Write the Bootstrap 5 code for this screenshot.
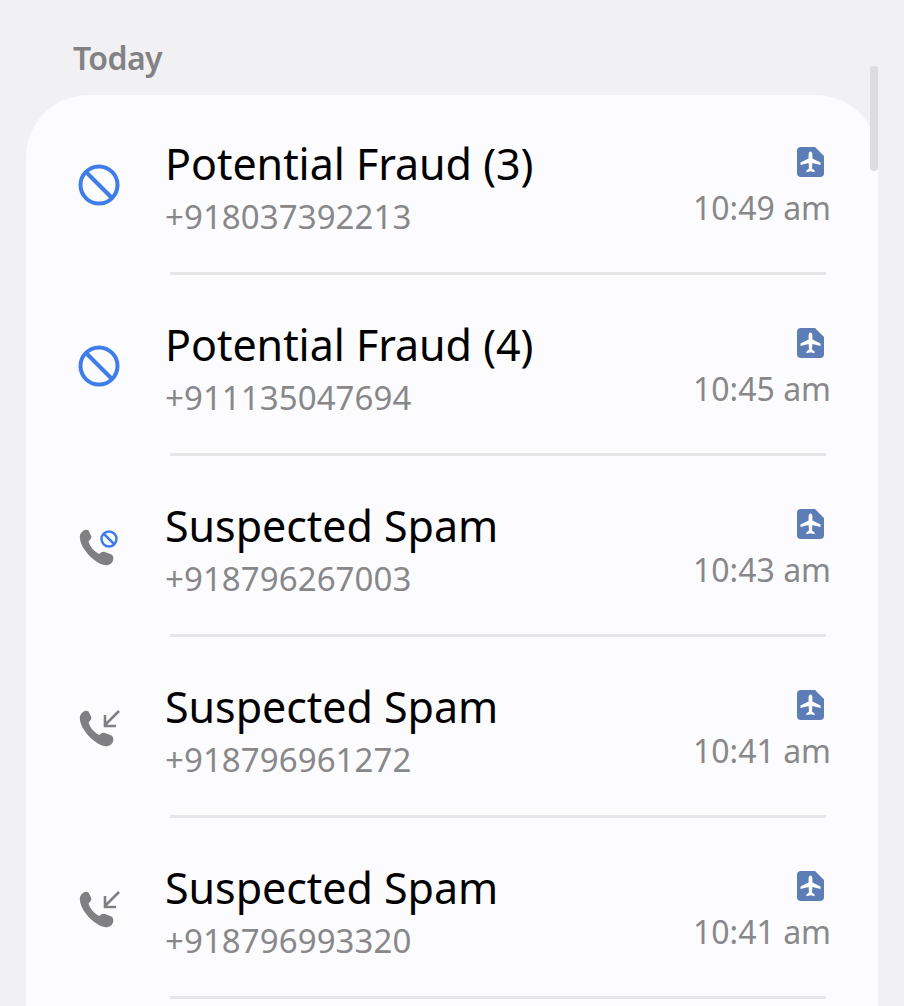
<!DOCTYPE html>
<html lang="en">
<head>
    <meta charset="UTF-8">
    <meta name="viewport" content="width=device-width, initial-scale=1.0">
    <title>Call log</title>
    <link rel="stylesheet" href="https://cdn.jsdelivr.net/npm/bootstrap@5.3.0/dist/css/bootstrap.min.css">
    <style>
        html, body {
            height: 1006px;
            overflow: hidden;
        }
        body {
            background-color: #f1f1f3;
            font-family: "Noto Sans", "Open Sans", sans-serif;
            position: relative;
        }
        .day-label {
            color: #828285;
            font-size: 32px;
            font-weight: 600;
            line-height: 40px;
            letter-spacing: -0.6px;
            padding: 38px 0 17px 73px;
        }
        .log-card {
            background-color: #fcfcfe;
            border-radius: 62px 62px 0 0;
            margin: 0 26px;
            height: 911px;
        }
        .log-row {
            height: 181px;
            padding: 45px 47px 0 0;
        }
        .log-row:first-child {
            height: 180px;
            padding-top: 44px;
        }
        .log-row::after {
            content: "";
            position: absolute;
            left: 144px;
            right: 52px;
            bottom: 0;
            height: 3px;
            background-color: #e6e6e8;
        }
        .icon-col {
            width: 139px;
            padding-left: 51px;
            margin-top: -45px;
        }
        .ban-icon {
            margin-left: 1px;
        }
        .log-title {
            color: #000;
            font-size: 43px;
            line-height: 50px;
            letter-spacing: -0.05px;
        }
        .log-number, .log-time {
            color: #88888b;
            line-height: 44px;
        }
        .log-number {
            font-size: 33px;
            letter-spacing: 0.08px;
            margin-top: 6px;
        }
        .log-time {
            font-size: 32px;
            margin-top: 9px;
        }
        .sim-icon {
            margin-right: 7px;
            margin-top: 8px;
            display: block;
        }
        .scroll-thumb {
            position: absolute;
            left: 870px;
            top: 66px;
            width: 8px;
            height: 105px;
            border-radius: 4px;
            background-color: #dddde0;
        }
    </style>
</head>
<body>
    <svg width="0" height="0" class="position-absolute">
        <defs>
            <symbol id="ban" viewBox="0 0 42 42">
                <circle cx="21" cy="21" r="18.5" fill="none" stroke="#3f7de8" stroke-width="4"/>
                <path d="M8 8 L34 34" stroke="#3f7de8" stroke-width="4" fill="none"/>
            </symbol>
            <symbol id="sim" viewBox="0 0 27 30">
                <path d="M4 0 H18 L27 9 V26 a4 4 0 0 1 -4 4 H4 a4 4 0 0 1 -4 -4 V4 a4 4 0 0 1 4 -4 Z" fill="#5c7db5"/>
                <path d="M13.500 4.500 c1.200 0 1.900 1.500 1.900 3 V11.500 L23.500 15.500 V18 L15.400 16 L15 21.500 L17.600 23.600 V25.200 L13.500 24.200 L9.400 25.200 V23.600 L12 21.500 L11.600 16 L3.500 18 V15.500 L11.600 11.500 V7.500 c0 -1.500 .7 -3 1.900 -3 Z" fill="#fff"/>
            </symbol>
            <symbol id="handset" viewBox="0 0 38 38">
                <path d="M2 6 C3.500 1.500 8.500 -.5 10.500 1.500 L13 6.500 C14 9 12.500 10.500 10.500 12.500 C12 17.500 16 22.500 21.500 25 C23 23 24.500 22.500 27 23 L33.500 25.500 C36.500 27.500 35.500 32.500 33 34.500 C29.500 37.500 25 36.500 20 33.500 C9 27 0.500 14.500 2 6 Z" fill="#808083"/>
            </symbol>
        </defs>
    </svg>

    <div class="day-label">Today</div>

    <div class="log-card">
        <div class="log-row d-flex position-relative">
            <div class="icon-col d-flex align-items-center flex-shrink-0">
                <svg class="ban-icon" width="42" height="42"><use href="#ban"/></svg>
            </div>
            <div class="flex-grow-1">
                <div class="log-title">Potential Fraud (3)</div>
                <div class="log-number">+918037392213</div>
            </div>
            <div class="d-flex flex-column align-items-end">
                <svg class="sim-icon" width="27" height="30"><use href="#sim"/></svg>
                <div class="log-time">10:49 am</div>
            </div>
        </div>
        <div class="log-row d-flex position-relative">
            <div class="icon-col d-flex align-items-center flex-shrink-0">
                <svg class="ban-icon" width="42" height="42"><use href="#ban"/></svg>
            </div>
            <div class="flex-grow-1">
                <div class="log-title">Potential Fraud (4)</div>
                <div class="log-number">+911135047694</div>
            </div>
            <div class="d-flex flex-column align-items-end">
                <svg class="sim-icon" width="27" height="30"><use href="#sim"/></svg>
                <div class="log-time">10:45 am</div>
            </div>
        </div>
        <div class="log-row d-flex position-relative">
            <div class="icon-col d-flex align-items-center flex-shrink-0">
                <svg class="call-icon" width="44" height="44" viewBox="0 0 44 44">
                    <use href="#handset" x="1" y="4" width="38" height="38"/>
                    <circle cx="32" cy="14" r="7.500" fill="none" stroke="#3f7de8" stroke-width="2.500"/>
                    <path d="M27 9 L37 19" stroke="#3f7de8" stroke-width="2.500"/>
                </svg>
            </div>
            <div class="flex-grow-1">
                <div class="log-title">Suspected Spam</div>
                <div class="log-number">+918796267003</div>
            </div>
            <div class="d-flex flex-column align-items-end">
                <svg class="sim-icon" width="27" height="30"><use href="#sim"/></svg>
                <div class="log-time">10:43 am</div>
            </div>
        </div>
        <div class="log-row d-flex position-relative">
            <div class="icon-col d-flex align-items-center flex-shrink-0">
                <svg class="call-icon" width="44" height="44" viewBox="0 0 44 44">
                    <use href="#handset" x="1" y="4" width="38" height="38"/>
                    <path d="M42 5 L28 19 M28 9 V20 H39" fill="none" stroke="#808083" stroke-width="2.600"/>
                </svg>
            </div>
            <div class="flex-grow-1">
                <div class="log-title">Suspected Spam</div>
                <div class="log-number">+918796961272</div>
            </div>
            <div class="d-flex flex-column align-items-end">
                <svg class="sim-icon" width="27" height="30"><use href="#sim"/></svg>
                <div class="log-time">10:41 am</div>
            </div>
        </div>
        <div class="log-row d-flex position-relative">
            <div class="icon-col d-flex align-items-center flex-shrink-0">
                <svg class="call-icon" width="44" height="44" viewBox="0 0 44 44">
                    <use href="#handset" x="1" y="4" width="38" height="38"/>
                    <path d="M42 5 L28 19 M28 9 V20 H39" fill="none" stroke="#808083" stroke-width="2.600"/>
                </svg>
            </div>
            <div class="flex-grow-1">
                <div class="log-title">Suspected Spam</div>
                <div class="log-number">+918796993320</div>
            </div>
            <div class="d-flex flex-column align-items-end">
                <svg class="sim-icon" width="27" height="30"><use href="#sim"/></svg>
                <div class="log-time">10:41 am</div>
            </div>
        </div>
    </div>

    <div class="scroll-thumb"></div>
</body>
</html>
